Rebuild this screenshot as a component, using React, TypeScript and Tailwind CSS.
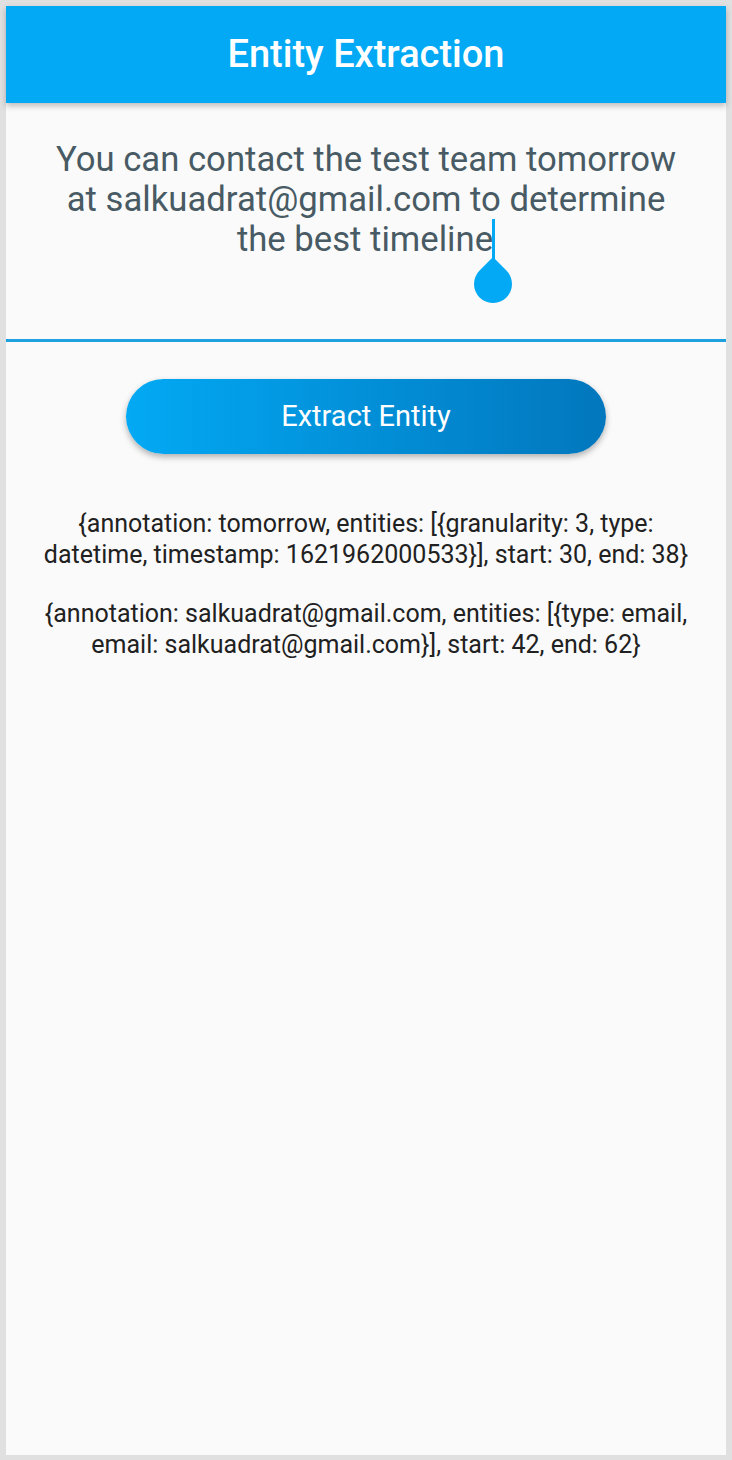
import React from "react";

export default function App() {
  return (
    <div className="w-[732px] h-[1460px] bg-[#e0e0e0] pt-[6px] pl-[6px] pr-[6px] pb-[5px]" style={{ fontFamily: "Roboto, 'Noto Sans', sans-serif" }}>
      <div className="w-[720px] h-full bg-[#fafafa] flex flex-col">
        <div className="h-[97px] shrink-0 bg-[#03a9f4] flex items-center justify-center shadow-[0_3px_6px_rgba(0,0,0,0.25)] relative z-10">
          <span className="text-white text-[38px] font-medium">Entity Extraction</span>
        </div>
        <div className="h-[239px] shrink-0 border-b-[3px] border-[#1ea1de] flex flex-col items-center pt-[36px]">
          <p className="text-[#485a64] text-[34.7px] leading-[40px] text-center px-[44px]">
            You can contact the test team tomorrow at salkuadrat@gmail.com to determine the best timeline
            <span className="inline-block relative w-[3px] h-[40px] bg-[#03a9f4] align-top -ml-[1px]">
              <svg className="absolute left-[-18px] top-[38px]" width="38" height="46" viewBox="0 0 38 46">
                <path d="M19 0 L32.43 13.57 A19 19 0 1 1 5.57 13.57 Z" fill="#03a9f4" />
              </svg>
            </span>
          </p>
        </div>
        <div className="flex justify-center pt-[37px]">
          <button className="w-[480px] h-[75px] rounded-full bg-gradient-to-r from-[#03a9f4] to-[#0277bd] text-white text-[29px] shadow-[0_3px_6px_rgba(0,0,0,0.3)]">
            Extract Entity
          </button>
        </div>
        <div className="flex flex-col items-center gap-[28px] pt-[54px] px-[30px] text-[#212121] text-[25px] leading-[31px] text-center">
          <p>{"{annotation: tomorrow, entities: [{granularity: 3, type: datetime, timestamp: 1621962000533}], start: 30, end: 38}"}</p>
          <p>{"{annotation: salkuadrat@gmail.com, entities: [{type: email, email: salkuadrat@gmail.com}], start: 42, end: 62}"}</p>
        </div>
      </div>
    </div>
  );
}
